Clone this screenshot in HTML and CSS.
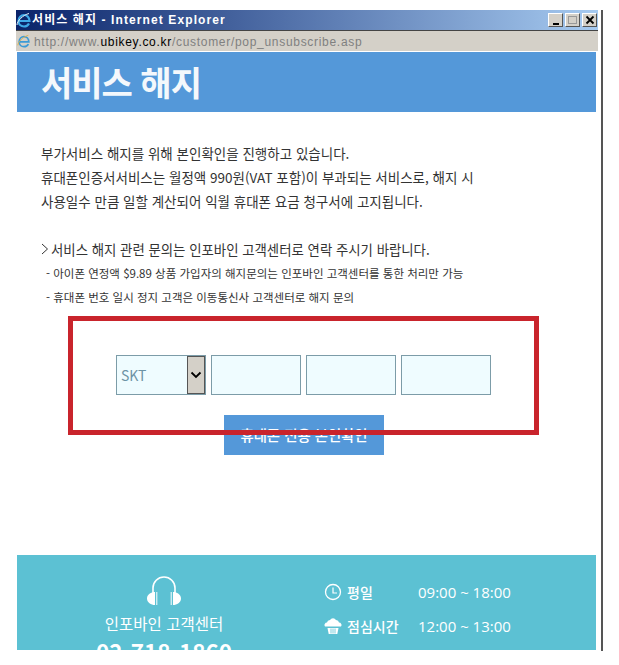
FILE: index.html
```html
<!DOCTYPE html>
<html lang="ko">
<head>
    <meta charset="UTF-8">
    <title>서비스 해지 - Internet Explorer</title>
    <link rel="stylesheet" href="styles.css">
</head>
<body>
    <div class="window">
        <div class="titlebar">
            <svg class="ie-big" viewBox="0 0 16 16" width="16" height="16">
                <path d="M3 9h10.500C13.500 5.500 11 3 8 3S2.500 5.500 2.500 9s2.500 5.500 5.500 5.500c2.300 0 4-1 5-3" fill="none" stroke="#3fa9e8" stroke-width="2.200"/>
                <path d="M1 13C1 9 7 3 13 1.500" fill="none" stroke="#e8f4fb" stroke-width="1"/>
            </svg>
            <span class="title-text">서비스 해지 - Internet Explorer</span>
            <div class="win-buttons">
                <span class="win-btn"><i class="min"></i></span>
                <span class="win-btn"><i class="max"></i></span>
                <span class="win-btn close">
                    <svg viewBox="0 0 10 10" width="10" height="10"><path d="M1.500 1.500l7 7M8.500 1.500l-7 7" stroke="#000" stroke-width="1.800"/></svg>
                </span>
            </div>
        </div>
        <div class="addressbar">
            <svg viewBox="0 0 16 16" width="14" height="14">
                <path d="M3 9h10.500C13.500 5.500 11 3 8 3S2.500 5.500 2.500 9s2.500 5.500 5.500 5.500c2.300 0 4-1 5-3" fill="none" stroke="#3b9ad6" stroke-width="2"/>
                <path d="M1 13C1 9 7 3 13 1.500" fill="none" stroke="#e0b040" stroke-width="1"/>
            </svg>
            <span class="url">http://www.<b>ubikey.co.kr</b>/customer/pop_unsubscribe.asp</span>
        </div>

        <div class="content">
            <header class="page-head">
                <h1>서비스 해지</h1>
            </header>

            <div class="notice">
                <p>부가서비스 해지를 위해 본인확인을 진행하고 있습니다.</p>
                <p>휴대폰인증서서비스는 월정액 990원(VAT 포함)이 부과되는 서비스로, 해지 시</p>
                <p>사용일수 만큼 일할 계산되어 익월 휴대폰 요금 청구서에 고지됩니다.</p>
            </div>

            <div class="inquiry">
                <p class="lead"><svg viewBox="0 0 8 12" width="8" height="12"><path d="M1 1l5.500 5L1 11" fill="none" stroke="#333" stroke-width="1"/></svg>서비스 해지 관련 문의는 인포바인 고객센터로 연락 주시기 바랍니다.</p>
                <p class="sub">- 아이폰 연정액 $9.89 상품 가입자의 해지문의는 인포바인 고객센터를 통한 처리만 가능</p>
                <p class="sub">- 휴대폰 번호 일시 정지 고객은 이동통신사 고객센터로 해지 문의</p>
            </div>

            <form class="auth-form">
                <div class="phone-row">
                    <div class="carrier">
                        <span>SKT</span>
                        <span class="arrow">
                            <svg viewBox="0 0 12 8" width="12" height="8"><path d="M1.500 1.500L6 6l4.500-4.500" fill="none" stroke="#000" stroke-width="1.800"/></svg>
                        </span>
                    </div>
                    <div class="num-box"></div>
                    <div class="num-box"></div>
                    <div class="num-box"></div>
                </div>
                <div class="submit">휴대폰 전용 본인확인</div>
                <div class="red-frame"></div>
            </form>

            <footer class="support">
                <div class="center-info">
                    <svg class="headset" viewBox="0 0 36 32" width="36" height="32">
                        <path d="M7 18V13a11 11 0 0 1 22 0v5" fill="none" stroke="#fff" stroke-width="1.600"/>
                        <path d="M9 17v13C5 30 1 27.500 1 23.500S5 17 9 17zM27 17v13c4 0 8-2.500 8-6.500S31 17 27 17z" fill="#fff"/>
                        <path d="M10.800 17v13M25.200 17v13" stroke="#fff" stroke-width="1"/>
                    </svg>
                    <div class="center-name">인포바인 고객센터</div>
                    <div class="center-tel">02-718-1860</div>
                </div>
                <div class="hours">
                    <div class="hours-row">
                        <svg viewBox="0 0 18 18" width="18" height="18">
                            <circle cx="9" cy="9" r="7.500" fill="none" stroke="#fff" stroke-width="1.300"/>
                            <path d="M9 4.500V10H13" fill="none" stroke="#fff" stroke-width="1.200"/>
                        </svg>
                        <span class="hours-label">평일</span>
                        <span class="hours-time">09:00 ~ 18:00</span>
                    </div>
                    <div class="hours-row">
                        <svg viewBox="0 0 18 18" width="18" height="18">
                            <path d="M1 9.500a2.500 2.500 0 0 1 2-4 3 3 0 0 1 3-2.500 3.500 3.500 0 0 1 6 0 3 3 0 0 1 3 2.500 2.500 2.500 0 0 1 2 4z" fill="#fff"/>
                            <path d="M3.500 11h11l-1.200 6H4.700z" fill="#fff"/>
                            <path d="M7 11.500v5M9 11.500v5M11 11.500v5" stroke="#5cc1d3" stroke-width=".8"/>
                        </svg>
                        <span class="hours-label">점심시간</span>
                        <span class="hours-time">12:00 ~ 13:00</span>
                    </div>
                </div>
            </footer>
        </div>
    </div>
</body>
</html>
```

FILE: styles.css
```css
html, body {
    height: 665px;
    overflow: hidden;
}

body {
    margin: 0;
    background: #fff;
    font-family: "Noto Sans CJK KR", "Noto Sans", sans-serif;
    color: #333;
}

p {
    margin: 0;
}

.window {
    box-sizing: border-box;
    width: 587px;
    height: 641px;
    margin: 10px 0 0 16px;
    padding-right: 3px;
    border-right: 2px solid #555;
    overflow: hidden;
}

.titlebar {
    display: flex;
    align-items: center;
    height: 20px;
    background: linear-gradient(to right, #0a246a, #5f7fb5 55%, #a6caf0);
    border-bottom: 1px solid #444;
}

.ie-big {
    flex: none;
}

.title-text {
    padding-bottom: 3px;
    font-family: "Liberation Sans", "Noto Sans CJK KR", sans-serif;
    font-size: 12px;
    font-weight: 700;
    letter-spacing: 1.1px;
    color: #fff;
}

.win-buttons {
    display: flex;
    gap: 2px;
    margin-left: auto;
    margin-right: 1px;
}

.win-btn {
    display: flex;
    align-items: center;
    justify-content: center;
    box-sizing: border-box;
    width: 15px;
    height: 14px;
    background: #d4d0c8;
    border: 1px solid;
    border-color: #fff #555 #555 #fff;
}

.win-btn .min {
    align-self: flex-end;
    width: 6px;
    height: 2px;
    margin-bottom: 1px;
    background: #000;
}

.win-btn .max {
    width: 7px;
    height: 6px;
    border: 1px solid #999;
}

.addressbar {
    display: flex;
    align-items: center;
    gap: 3px;
    height: 20px;
    padding-left: 1px;
    background: #d4d0c8;
    border-bottom: 1px solid #fff;
}

.url {
    padding-top: 1px;
    font-family: "Liberation Sans", sans-serif;
    font-size: 12px;
    letter-spacing: 0.7px;
    color: #808080;
}

.url b {
    font-weight: 400;
    color: #000;
}

.content {
    margin-left: 1px;
    width: 579px;
}

.page-head {
    height: 60px;
    background: #5498d9;
}

.page-head h1 {
    margin: 0;
    padding-left: 24px;
    font-size: 34px;
    font-weight: 700;
    line-height: 60px;
    letter-spacing: -1px;
    color: #f4f8fc;
}

.notice {
    margin: 29px 0 0 24px;
    font-size: 13.5px;
    line-height: 24px;
}

.inquiry {
    margin: 24px 0 0 24px;
}

.lead {
    display: flex;
    align-items: center;
    gap: 2px;
    font-size: 13.4px;
    line-height: 24px;
}

.sub {
    margin-left: 5px;
    font-size: 11.5px;
    line-height: 24px;
}

.auth-form {
    position: relative;
    height: 246px;
    padding-top: 46px;
    box-sizing: border-box;
}

.phone-row {
    display: flex;
    gap: 5px;
    margin-left: 99px;
}

.carrier, .num-box {
    box-sizing: border-box;
    height: 40px;
    width: 90px;
    background: #effcff;
    border: 1px solid #7c9ca8;
}

.carrier {
    display: flex;
    align-items: center;
    justify-content: space-between;
    padding-left: 4px;
    font-size: 14px;
    color: #6c93a5;
}

.arrow {
    display: flex;
    align-items: center;
    justify-content: center;
    box-sizing: border-box;
    width: 18px;
    height: 38px;
    background: #d4d0c8;
    border: 1px solid #555;
}

.submit {
    width: 160px;
    height: 40px;
    margin: 20px 0 0 207px;
    background: #5498d9;
    font-size: 14.4px;
    font-weight: 500;
    line-height: 40px;
    text-align: center;
    color: #fff;
}

.red-frame {
    position: absolute;
    left: 51px;
    top: 7px;
    box-sizing: border-box;
    width: 471px;
    height: 119px;
    border: 5px solid #c9242c;
}

.support {
    display: flex;
    height: 95px;
    overflow: hidden;
    background: #5cc1d3;
    color: #fff;
}

.center-info {
    width: 294px;
    padding-top: 20px;
    text-align: center;
}

.headset {
    display: block;
    margin: 0 auto;
}

.center-name {
    margin-top: 4px;
    font-size: 15.5px;
    line-height: 24px;
}

.center-tel {
    font-size: 22.5px;
    font-weight: 700;
    line-height: 32px;
}

.hours {
    padding-top: 20px;
    margin-left: 13px;
}

.hours-row {
    display: flex;
    align-items: center;
    height: 34px;
    font-size: 14px;
}

.hours-label {
    width: 71px;
    margin-left: 5px;
    font-weight: 500;
}

.hours-time {
    font-family: "Open Sans", sans-serif;
    font-size: 15px;
}
```
